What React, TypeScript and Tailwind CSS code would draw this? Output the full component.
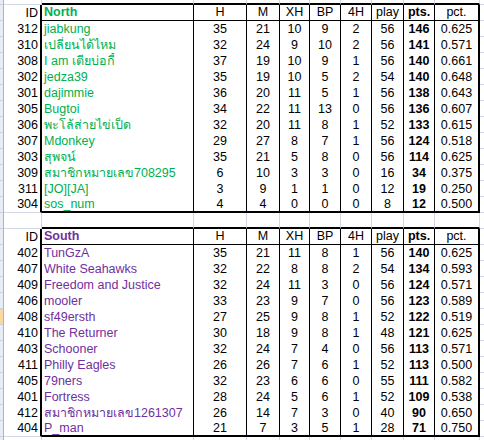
import React from 'react';

type Team = [number, string, number, number, number, number, number, number, number, string];

const north: Team[] = [
  [312, 'jiabkung', 35, 21, 10, 9, 2, 56, 146, '0.625'],
  [310, 'เปลี่ยนได้ไหม', 32, 24, 9, 10, 2, 56, 141, '0.571'],
  [308, 'I am เตียบ่อกี้', 37, 19, 10, 9, 1, 56, 140, '0.661'],
  [302, 'jedza39', 35, 19, 10, 5, 2, 54, 140, '0.648'],
  [301, 'dajimmie', 36, 20, 11, 5, 1, 56, 138, '0.643'],
  [305, 'Bugtoi', 34, 22, 11, 13, 0, 56, 136, '0.607'],
  [306, 'พะโล้ส่ายไข่เป็ด', 32, 20, 11, 8, 1, 52, 133, '0.615'],
  [307, 'Mdonkey', 29, 27, 8, 7, 1, 56, 124, '0.518'],
  [303, 'สุพจน์', 35, 21, 5, 8, 0, 56, 114, '0.625'],
  [309, 'สมาชิกหมายเลข708295', 6, 10, 3, 3, 0, 16, 34, '0.375'],
  [311, '[JO][JA]', 3, 9, 1, 1, 0, 12, 19, '0.250'],
  [304, 'sos_num', 4, 4, 0, 0, 0, 8, 12, '0.500'],
];

const south: Team[] = [
  [402, 'TunGzA', 35, 21, 11, 8, 1, 56, 140, '0.625'],
  [407, 'White Seahawks', 32, 22, 8, 8, 2, 54, 134, '0.593'],
  [409, 'Freedom and Justice', 32, 24, 11, 3, 0, 56, 124, '0.571'],
  [406, 'mooler', 33, 23, 9, 7, 0, 56, 123, '0.589'],
  [408, 'sf49ersth', 27, 25, 9, 8, 1, 52, 122, '0.519'],
  [410, 'The Returner', 30, 18, 9, 8, 1, 48, 121, '0.625'],
  [403, 'Schooner', 32, 24, 7, 4, 0, 56, 113, '0.571'],
  [411, 'Philly Eagles', 26, 26, 7, 6, 1, 52, 113, '0.500'],
  [405, '79ners', 32, 23, 6, 6, 0, 55, 111, '0.582'],
  [401, 'Fortress', 28, 24, 5, 6, 1, 52, 109, '0.538'],
  [412, 'สมาชิกหมายเลข1261307', 26, 14, 7, 3, 0, 40, 90, '0.650'],
  [404, 'P_man', 21, 7, 3, 5, 1, 28, 71, '0.750'],
];

// widths of H .. pct
const numW = ['w-[53px]', 'w-[33px]', 'w-[30px]', 'w-[31px]', 'w-[31px]', 'w-[32px]', 'w-[31px]', 'w-[45px]'];
const heads = ['H', 'M', 'XH', 'BP', '4H', 'play', 'pts.', 'pct.'];

function RowHead({ sel }: { sel?: boolean }) {
  return (
    <div
      className={`w-[4px] shrink-0 border-r border-b border-r-[#9eb6ce] border-b-[#c5d1e0] ${
        sel ? 'bg-[#f9d99f]' : 'bg-[#e8edf5]'
      }`}
    />
  );
}

function BlankRow({ h, aboveTable }: { h: string; aboveTable?: boolean }) {
  return (
    <div className={`flex ${h}`}>
      <RowHead />
      <div className="w-[38px] shrink-0 border-r border-b border-r-[#d0d7e5] border-b-[#d0d7e5]" />
      {['w-[152px]', ...numW].map((w, i) => (
        <div
          key={i}
          className={`${w} shrink-0 border-r border-r-[#d0d7e5] ${
            aboveTable ? 'border-b-2 border-b-black' : 'border-b border-b-[#d0d7e5]'
          }`}
        />
      ))}
      <div className="flex-1 border-b border-b-[#d0d7e5]" />
    </div>
  );
}

function Cell({
  w,
  children,
  className = '',
}: {
  w: string;
  children?: React.ReactNode;
  className?: string;
}) {
  return <div className={`${w} shrink-0 flex items-center overflow-hidden whitespace-nowrap ${className}`}>{children}</div>;
}

function Section({ title, color, teams, selId }: { title: string; color: string; teams: Team[]; selId?: number }) {
  return (
    <>
      {/* header row */}
      <div className="flex h-[16px]">
        <RowHead />
        <Cell w="w-[38px]" className="justify-end pr-[2px] border-r-2 border-r-black">
          ID
        </Cell>
        <Cell w="w-[152px]" className={`pl-[2px] font-bold border-r border-b border-black ${color}`}>
          {title}
        </Cell>
        {heads.map((t, i) => (
          <Cell
            key={t}
            w={numW[i]}
            className={`justify-center border-b border-b-black ${
              i === 7 ? 'border-r-2 border-r-black' : 'border-r border-r-black'
            } ${t === 'pts.' ? 'font-bold' : ''}`}
          >
            {t}
          </Cell>
        ))}
        <div className="flex-1 border-b border-b-[#d0d7e5]" />
      </div>
      {teams.map((tm, r) => {
        const last = r === teams.length - 1;
        const bottom = last ? 'border-b-2 border-b-black' : '';
        return (
          <div key={tm[0]} className="flex h-[16px]">
            <RowHead sel={tm[0] === selId} />
            <Cell
              w="w-[38px]"
              className={`justify-end pr-[2px] border-r-2 border-r-black ${last ? 'border-b border-b-[#d0d7e5]' : ''}`}
            >
              {tm[0]}
            </Cell>
            <Cell w="w-[152px]" className={`pl-[2px] border-r border-r-black ${bottom} ${color}`}>
              {tm[1]}
            </Cell>
            {tm.slice(2).map((v, i) => (
              <Cell
                key={i}
                w={numW[i]}
                className={`justify-center ${bottom} ${
                  i === 7 ? 'border-r-2 border-r-black' : 'border-r border-r-black'
                } ${i === 6 ? 'font-bold' : ''}`}
              >
                {v}
              </Cell>
            ))}
            <div className="flex-1 border-b border-b-[#d0d7e5]" />
          </div>
        );
      })}
    </>
  );
}

export default function App() {
  return (
    <div
      className="w-[484px] h-[440px] overflow-hidden bg-white text-black text-[12.5px] leading-none"
      style={{ fontFamily: '"Liberation Sans", "Noto Sans", sans-serif' }}
    >
      <BlankRow h="h-[5px]" aboveTable />
      <Section title="North" color="text-[#00b050]" teams={north} />
      <BlankRow h="h-[16px]" aboveTable />
      <Section title="South" color="text-[#7030a0]" teams={south} selId={408} />
      <BlankRow h="h-[16px]" />
    </div>
  );
}
